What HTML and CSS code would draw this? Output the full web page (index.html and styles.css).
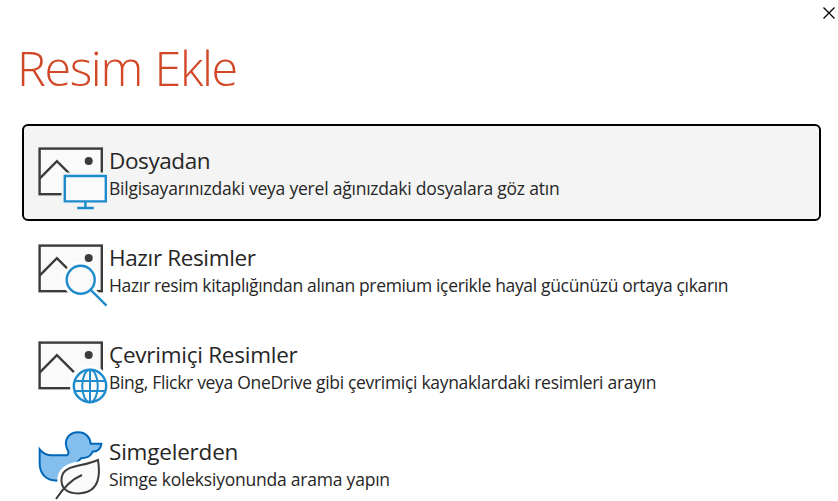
FILE: index.html
```
<!DOCTYPE html>
<html lang="tr">
<head>
<meta charset="utf-8">
<title>Resim Ekle</title>
<link rel="stylesheet" href="styles.css">
</head>
<body>
<main class="dialog">
  <header class="titlebar">
    <button class="close" aria-label="Kapat"><svg width="12" height="12" viewBox="0 0 12 12"><path d="M.5 .5l11 11M11.5 .5l-11 11"/></svg></button>
  </header>
  <h1 class="heading">Resim Ekle</h1>
  <div class="options">
    <section class="option selected">
      <svg class="icon" viewBox="0 0 72 72">
        <rect class="frame" x="2.6" y="8.6" width="62.2" height="45.6"/>
        <path class="line" d="M2.6 38.6L19.9 21.2l17 17"/>
        <circle class="dot" cx="51.7" cy="21" r="4"/>
        <rect class="halo" x="24.5" y="32.5" width="48" height="32"/>
        <path class="blue panel" d="M27.8 36h41v25.4h-41z"/>
        <path class="blue" d="M48.4 61.2V68M40.2 68h16.5"/>
      </svg>
      <div class="copy"><h2 class="name n1">Dosyadan</h2><p class="desc d1">Bilgisayarınızdaki veya yerel ağınızdaki dosyalara göz atın</p></div>
    </section>
    <section class="option">
      <svg class="icon" viewBox="0 0 72 72">
        <rect class="frame" x="2.6" y="8.6" width="62.2" height="45.6"/>
        <path class="line" d="M2.6 38.6L19.9 21.2l17 17"/>
        <circle class="dot" cx="51.7" cy="21" r="4"/>
        <circle class="halo" cx="43.7" cy="42.8" r="18"/>
        <path class="halo-line" d="M53.5 53L70 69"/>
        <circle class="blue panel" cx="43.7" cy="42.8" r="14"/>
        <path class="blue" d="M53.7 52.8L69.5 68.6"/>
      </svg>
      <div class="copy"><h2 class="name n2">Hazır Resimler</h2><p class="desc d2">Hazır resim kitaplığından alınan premium içerikle hayal gücünüzü ortaya çıkarın</p></div>
    </section>
    <section class="option">
      <svg class="icon" viewBox="0 0 72 72">
        <rect class="frame" x="2.6" y="8.6" width="62.2" height="45.6"/>
        <path class="line" d="M2.6 38.6L19.9 21.2l17 17"/>
        <circle class="dot" cx="51.7" cy="21" r="4"/>
        <circle class="halo" cx="53" cy="52" r="20"/>
        <circle class="blue panel" cx="53" cy="52" r="16.2"/>
        <ellipse class="blue globe" cx="53" cy="52" rx="7.8" ry="16.2"/>
        <path class="blue globe" d="M53 35.8v32.4M37.8 47.1h30.4M37.8 56.9h30.4"/>
      </svg>
      <div class="copy"><h2 class="name n3">Çevrimiçi Resimler</h2><p class="desc d3">Bing, Flickr veya OneDrive gibi çevrimiçi kaynaklardaki resimleri arayın</p></div>
    </section>
    <section class="option">
      <svg class="icon" viewBox="19 18 216 216">
        <path class="duck" d="M27 73C38 86 52 92 66 91H108C115 88 115 80 110 73C98 47 112 22 143 22C164 22 178 36 180 56H212C211 72 200 79 186 80C180 94 172 98 152 100L80 167C40 167 27 140 27 115Z"/>
        <path class="leaf-halo" d="M202 105C208 143 210 200 150 205C110 208 88 190 93 157C100 118 153 127 202 105Z"/>
        <path class="leaf" d="M202 105C208 143 210 200 150 205C110 208 88 190 93 157C100 118 153 127 202 105Z"/>
        <path class="stem" d="M76 222C95 193 118 165 154 150"/>
      </svg>
      <div class="copy"><h2 class="name n4">Simgelerden</h2><p class="desc d4">Simge koleksiyonunda arama yapın</p></div>
    </section>
  </div>
</main>
</body>
</html>
```
FILE: styles.css
```
* { box-sizing: border-box; }
body { margin: 0; background: #fff; color: #262626; font-family: "Open Sans", "Noto Sans", sans-serif; overflow: hidden; }
.dialog { height: 501px; overflow: hidden; }
.titlebar { height: 34px; display: flex; justify-content: flex-end; padding: 7px 3px 0 0; }
.close { width: 12px; height: 12px; padding: 0; border: 0; background: none; display: block; }
.close svg { display: block; fill: none; stroke: #000; stroke-width: 1.3; }
.heading { margin: 0; height: 90px; padding-left: 17px; font-size: 48.5px; line-height: 66px; font-weight: 300; color: #d24726; letter-spacing: -1.4px; word-spacing: 1.5px; white-space: nowrap; }
.options { padding: 0 17px 0 22px; }
.option { height: 97px; display: flex; border: 2px solid transparent; border-radius: 6px; padding: 14px 0 0 13px; }
.selected { background: #f4f4f4; border-color: #000; }
.icon { width: 72px; height: 72px; flex: none; overflow: visible; fill: none; }
.frame { fill: #fafafa; stroke: #3b3b3b; stroke-width: 2.4; }
.line { stroke: #3b3b3b; stroke-width: 2.4; }
.dot { fill: #3b3b3b; }
.halo { fill: #fff; }
.selected .halo { fill: #f4f4f4; }
.halo-line { stroke: #fff; stroke-width: 8; }
.blue { stroke: #1e8bcd; stroke-width: 2.4; }
.panel { fill: #fafafa; }
.globe { stroke-width: 2; }
.duck { fill: #83beec; stroke: #0067b8; stroke-width: 6; }
.leaf-halo { fill: #fff; stroke: #fff; stroke-width: 25; }
.leaf { fill: #fafafa; stroke: #3b3b3b; stroke-width: 6; }
.stem { stroke: #3b3b3b; stroke-width: 6; }
.copy { padding-top: 6px; white-space: nowrap; }
.name { margin: 0; font-size: 22.5px; line-height: 30px; font-weight: 400; }
.desc { margin: 0; font-size: 17.5px; line-height: 25px; }
.n1 { letter-spacing: -0.4px; }
.n2 { letter-spacing: -0.36px; }
.n3 { letter-spacing: -0.25px; }
.n4 { letter-spacing: -0.2px; }
.d1 { letter-spacing: -0.22px; }
.d2 { letter-spacing: -0.34px; }
.d3 { letter-spacing: -0.31px; }
.d4 { letter-spacing: -0.22px; }
```
